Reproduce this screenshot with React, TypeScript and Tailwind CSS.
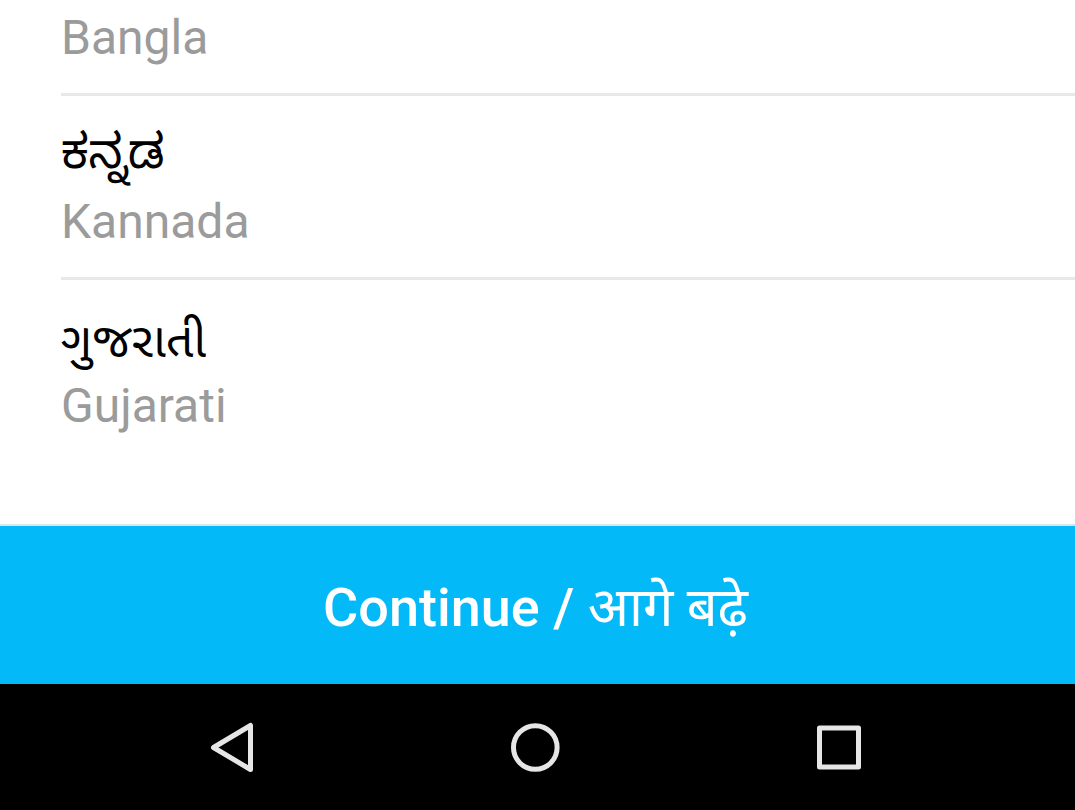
type Language = { name: string; lang?: string; native?: string; font?: string };

const languages: Language[] = [
  { name: "Bangla" },
  { name: "Kannada", lang: "kn", native: "ಕನ್ನಡ", font: "font-['Noto_Sans_Kannada','Noto_Sans',sans-serif]" },
  { name: "Gujarati", lang: "gu", native: "ગુજરાતી", font: "font-['Noto_Sans_Gujarati','Noto_Sans',sans-serif]" },
];

export default function App() {
  return (
    <div className="flex min-h-screen flex-col justify-end bg-white font-[Roboto,'Noto_Sans',sans-serif]">
      <ul className="flex flex-col pb-[63px] pl-[61px]">
        {languages.map((l) => (
          <li key={l.name} className="border-b-[3px] border-[#e8e8e8] last:border-b-0">
            <button type="button" className="flex w-full flex-col pb-[21px] text-left text-[48px]">
              {l.native && (
                <span lang={l.lang} className="flex h-[92px] items-end leading-[52px] text-black">
                  <span className={l.font}>{l.native}</span>
                </span>
              )}
              <span className="leading-[68px] text-[#9b9b9b]">{l.name}</span>
            </button>
          </li>
        ))}
      </ul>
      <button type="button" className="flex h-[160px] items-center justify-center border-t-2 border-[#d8e8ea] bg-[#03b9f8] pr-1 pt-1 text-[54px] font-medium text-white">
        <span>Continue / <span lang="hi" className="font-normal">आगे बढ़े</span></span>
      </button>
      <nav className="grid h-[126px] grid-cols-3 items-center bg-black pl-[79px] pr-[84px]">
        <button type="button" aria-label="Back" className="flex justify-center">
          <svg width="52" height="60" viewBox="0 0 52 60" fill="none" stroke="#e6e6e6" strokeWidth="5" strokeLinejoin="round"><path d="M45.5 8.5V52.5L8.5 30.5Z" /></svg>
        </button>
        <button type="button" aria-label="Home" className="flex justify-center">
          <svg width="52" height="52" viewBox="0 0 52 52" fill="none" stroke="#e6e6e6" strokeWidth="5"><circle cx="26.3" cy="26.5" r="21.8" /></svg>
        </button>
        <button type="button" aria-label="Recent apps" className="flex justify-center">
          <svg width="52" height="52" viewBox="0 0 52 52" fill="none" stroke="#e6e6e6" strokeWidth="5" strokeLinejoin="round"><rect x="6.5" y="7" width="39" height="39" /></svg>
        </button>
      </nav>
    </div>
  );
}
